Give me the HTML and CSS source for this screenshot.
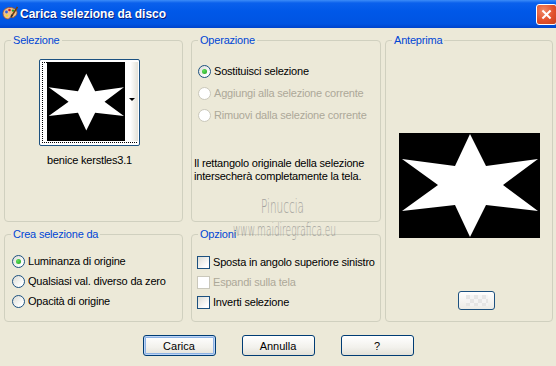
FILE: index.html
```html
<!DOCTYPE html>
<html lang="it">
<head>
  <meta charset="UTF-8" />
  <title>Carica selezione da disco</title>
  <link rel="stylesheet" href="styles.css">
</head>
<body>
  <div class="window">
    <!-- Title bar -->
    <div class="titlebar">
      <svg class="app-icon" viewBox="0 0 16 16">
        <path d="M8 1.5C4 1.5 1 4 1 7.5c0 3 2.2 5.5 5 5.5 1.2 0 1.2-1.3 2.2-1.6 1-.3 2.3.6 3.6-.2C13.6 10.2 15 8.6 15 6.8 15 3.8 11.8 1.5 8 1.5Z" fill="#f0c08a" stroke="#a0522d" stroke-width=".8"/>
        <circle cx="4.5" cy="6" r="1.4" fill="#3060e0"/>
        <circle cx="7.5" cy="4" r="1.3" fill="#d02020"/>
        <circle cx="11" cy="4.6" r="1.2" fill="#20a030"/>
        <circle cx="5" cy="9.6" r="1.2" fill="#f0e020"/>
        <path d="M15.5 1 10 9.5" stroke="#704010" stroke-width="1.6"/>
        <path d="M10.4 8.8 9 11" stroke="#303030" stroke-width="1.8"/>
      </svg>
      <span class="title">Carica selezione da disco</span>
      <span class="close">
        <svg viewBox="0 0 21 21"><path d="M6 6l9 9M15 6l-9 9" stroke="#fff" stroke-width="2.2"/></svg>
      </span>
    </div>

    <div class="content">
      <div class="groups">
        <fieldset class="group sel">
          <legend>Selezione</legend>
          <div class="thumb-btn">
            <div class="thumb">
              <svg viewBox="0 0 141 105" width="78" height="58" preserveAspectRatio="none">
                <polygon points="71,1 87,33 139,26 104,52 139,78 87,72 71,104 56,72 3,78 39,52 3,26 56,33" fill="#fff"/>
              </svg>
            </div>
            <div class="thumb-drop"><span class="arrow"></span></div>
          </div>
          <div class="thumb-name">benice kerstles3.1</div>
        </fieldset>

        <fieldset class="group op">
          <legend>Operazione</legend>
          <div class="row"><span class="radio on"></span>Sostituisci selezione</div>
          <div class="row off"><span class="radio"></span>Aggiungi alla selezione corrente</div>
          <div class="row off"><span class="radio"></span>Rimuovi dalla selezione corrente</div>
          <p class="note">Il rettangolo originale della selezione intersecherà completamente la tela.</p>
        </fieldset>

        <fieldset class="group preview">
          <legend>Anteprima</legend>
          <div class="preview-img">
            <svg viewBox="0 0 141 105" width="141" height="105">
              <polygon points="71,1 87,33 139,26 104,52 139,78 87,72 71,104 56,72 3,78 39,52 3,26 56,33" fill="#fff"/>
            </svg>
          </div>
          <div class="mini-btn"><span class="checker"></span></div>
        </fieldset>

        <fieldset class="group crea">
          <legend>Crea selezione da</legend>
          <div class="row"><span class="radio on"></span>Luminanza di origine</div>
          <div class="row"><span class="radio"></span>Qualsiasi val. diverso da zero</div>
          <div class="row"><span class="radio"></span>Opacità di origine</div>
        </fieldset>

        <fieldset class="group opts">
          <legend>Opzioni</legend>
          <div class="row"><span class="check"></span>Sposta in angolo superiore sinistro</div>
          <div class="row off"><span class="check"></span>Espandi sulla tela</div>
          <div class="row"><span class="check"></span>Inverti selezione</div>
        </fieldset>
      </div>

      <div class="buttons">
        <button class="btn default">Carica</button>
        <button class="btn">Annulla</button>
        <button class="btn">?</button>
      </div>
    </div>

    <!-- watermark over the dialog -->
    <span class="wm wm-name">Pinuccia</span>
    <span class="wm wm-site">www.maidiregrafica.eu</span>
  </div>
</body>
</html>
```

FILE: styles.css
```css
* {
  box-sizing: border-box;
}

body {
  margin: 0;
  background: #ece9d8;
  font-family: 'Liberation Sans', Arial, sans-serif;
  font-size: 11px;
  letter-spacing: -0.2px;
  color: #000;
}

.window {
  position: relative;
  width: 556px;
  height: 366px;
  background: #ece9d8;
  overflow: hidden;
}

/* title bar */
.titlebar {
  height: 28px;
  display: flex;
  align-items: center;
  padding-left: 2px;
  background: linear-gradient(#3c8cf8 0, #0a60ec 3px, #0058e8 40%, #0054e2 85%, #0044cc 100%);
}

.app-icon {
  width: 16px;
  height: 16px;
  margin-right: 2px;
}

.title {
  font-size: 12px;
  font-weight: bold;
  letter-spacing: 0;
  color: #fff;
  text-shadow: 1px 1px 0 #0a1e7a;
  flex: 1;
}

.close {
  width: 21px;
  height: 21px;
  margin-right: -1px;
  border: 1px solid #fff;
  border-radius: 3px;
  background: radial-gradient(circle at 35% 30%, #f08a68, #e2512c 55%, #c8401e);
  display: flex;
}

.close svg {
  width: 100%;
  height: 100%;
}

/* group boxes */
.content {
  padding: 6px 0 0 4px;
}

.groups {
  display: grid;
  grid-template-columns: 179px 194px 168px;
  grid-template-rows: 188px 94px;
  column-gap: 4px;
  row-gap: 6px;
}

.group {
  margin: 0;
  padding: 0;
  min-width: 0;
  border: 1px solid #d0d0bf;
  border-radius: 4px;
}

.group legend {
  margin-left: 6px;
  padding: 0 2px;
  line-height: 13px;
  color: #0046d5;
}

.op,
.opts {
  margin-left: 4px;
}

.preview {
  grid-column: 3;
  grid-row: 1 / 3;
  display: flex;
  flex-direction: column;
  align-items: center;
}

.sel {
  display: flex;
  flex-direction: column;
  align-items: center;
  padding-top: 12px;
  padding-right: 8px;
}

/* selection thumbnail */
.thumb-btn {
  width: 101px;
  height: 87px;
  display: flex;
  padding: 2px 1px 4px 7px;
  border: 1px solid #1c5180;
  border-radius: 2px;
  background: #fff;
  box-shadow: inset 0 0 0 1px #fff;
  outline: 1px dotted #000;
  outline-offset: -4px;
}

.thumb {
  width: 78px;
  height: 79px;
  background: #000;
  display: flex;
  align-items: center;
}

.thumb-drop {
  flex: 1;
  position: relative;
  background: linear-gradient(90deg, #fff 40%, #e4e2d8);
}

.arrow {
  position: absolute;
  right: 3px;
  top: 36px;
  border-left: 3px solid transparent;
  border-right: 3px solid transparent;
  border-top: 3px solid #000;
}

.thumb-name {
  margin-top: 8px;
  line-height: 13px;
}

/* rows */
.row {
  display: flex;
  align-items: center;
  gap: 3px;
  white-space: nowrap;
}

.op .row {
  height: 22px;
  padding-left: 6px;
}

.op .row:first-of-type {
  margin-top: 13px;
}

.crea .row,
.opts .row {
  height: 20px;
}

.crea .row {
  padding-left: 7px;
}

.opts .row {
  padding-left: 5px;
}

.crea .row:first-of-type {
  margin-top: 10px;
}

.opts .row:first-of-type {
  margin-top: 11px;
}

.row.off {
  color: #aca899;
}

.radio {
  flex: none;
  width: 13px;
  height: 13px;
  border-radius: 50%;
  border: 1px solid #1c5180;
  background: linear-gradient(135deg, #dcdcd5, #fff 80%);
  display: flex;
  align-items: center;
  justify-content: center;
}

.radio.on::after {
  content: "";
  width: 5px;
  height: 5px;
  border-radius: 50%;
  background: radial-gradient(circle at 35% 35%, #5ee05a, #21a121);
}

.off .radio,
.off .check {
  border-color: #cac8bb;
  background: #fff;
}

.check {
  flex: none;
  width: 13px;
  height: 13px;
  border: 1px solid #1c5180;
  background: linear-gradient(135deg, #dcdcd5, #fff 80%);
}

.note {
  margin: 31px 0 0 2px;
  line-height: 13px;
}

/* preview */
.preview-img {
  margin-top: 86px;
  width: 141px;
  height: 105px;
  background: #000;
}

.preview-img svg {
  display: block;
}

.mini-btn {
  margin-top: 53px;
  margin-left: 15px;
  width: 37px;
  height: 19px;
  border: 1px solid #1c5180;
  border-radius: 3px;
  background: linear-gradient(#fff, #ecebe6);
  display: flex;
  align-items: center;
  justify-content: center;
}

.checker {
  width: 22px;
  height: 11px;
  background: repeating-conic-gradient(#f4f4f4 0 25%, #e2e2e2 0 50%) 0 0 / 8px 8px;
  opacity: .8;
}

/* buttons */
.buttons {
  margin-top: 13px;
  margin-left: -4px;
  display: flex;
  justify-content: center;
  gap: 26px;
}

.btn {
  width: 73px;
  height: 21px;
  padding: 0;
  font-family: inherit;
  font-size: 11px;
  color: #000;
  border: 1px solid #003c74;
  border-radius: 3px;
  background: linear-gradient(#fff, #f2f1ec 60%, #e3e1d8);
}

.btn.default {
  box-shadow: inset 0 0 0 1px #bcd4f6, inset 0 0 0 2px #8db2e3;
}

/* watermark */
.wm {
  position: absolute;
  font-family: 'DejaVu Sans', sans-serif;
  font-weight: 200;
  color: #858585;
  opacity: .7;
  letter-spacing: 0;
  white-space: nowrap;
  transform-origin: 0 0;
}

.wm-name {
  left: 261px;
  top: 195px;
  font-size: 19px;
  transform: scaleX(0.55);
}

.wm-site {
  left: 233px;
  top: 219px;
  font-size: 18px;
  transform: scaleX(0.5);
}
```
